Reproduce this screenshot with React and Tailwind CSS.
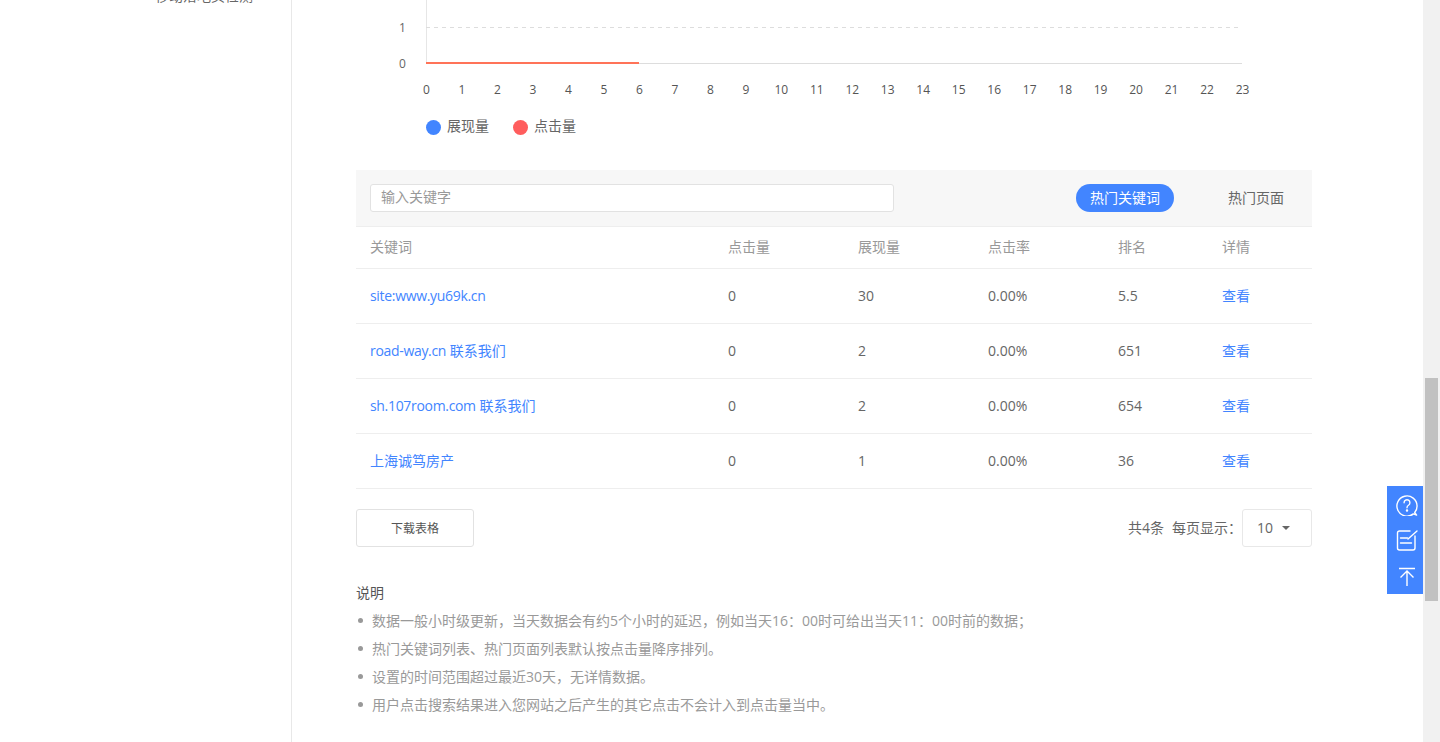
const hours = Array.from({ length: 24 }, (_, i) => i)

const rows = [
  { kw: 'site:www.yu69k.cn', cn: '', click: '0', show: '30', rate: '0.00%', rank: '5.5' },
  { kw: 'road-way.cn', cn: ' 联系我们', click: '0', show: '2', rate: '0.00%', rank: '651' },
  { kw: 'sh.107room.com', cn: ' 联系我们', click: '0', show: '2', rate: '0.00%', rank: '654' },
  { kw: '', cn: '上海诚笃房产', click: '0', show: '1', rate: '0.00%', rank: '36' },
]

const notes = [
  '数据一般小时级更新，当天数据会有约5个小时的延迟，例如当天16：00时可给出当天11：00时前的数据；',
  '热门关键词列表、热门页面列表默认按点击量降序排列。',
  '设置的时间范围超过最近30天，无详情数据。',
  '用户点击搜索结果进入您网站之后产生的其它点击不会计入到点击量当中。',
]

const Chart = () => (
  <svg width="956" height="100" className="block">
    <line x1="70.5" y1="0" x2="70.5" y2="64" stroke="#e6e6e6" />
    <line x1="70" y1="27.5" x2="886" y2="27.5" stroke="#ddd" strokeDasharray="4 4" />
    <line x1="70" y1="63.5" x2="886" y2="63.5" stroke="#ddd" />
    <line x1="70" y1="63" x2="283" y2="63" stroke="#ff7358" strokeWidth="2" />
    <text x="46.5" y="32" textAnchor="middle" fontSize="12" fill="#666">1</text>
    <text x="46.5" y="68" textAnchor="middle" fontSize="12" fill="#666">0</text>
    {hours.map((h) => (
      <text key={h} x={70.5 + h * 35.48} y="94" textAnchor="middle" fontSize="12" fill="#555">
        {h}
      </text>
    ))}
  </svg>
)

const App = () => {
  return (
    <div className="flex h-[742px] overflow-hidden bg-white text-[14px] font-['Open_Sans','Noto_Sans_CJK_SC',sans-serif] text-[#666]">
      {/* Sidebar */}
      <div className="w-[292px] shrink-0 border-r border-[#e8e8e8] pl-[155px]">
        <div className="-mt-[14px] h-5 leading-5 text-[#666]">移动落地页检测</div>
      </div>

      {/* Main */}
      <div className="flex-1 pl-[64px] pr-[111px]">
        <Chart />

        <div className="mt-[18px] ml-[70px] flex h-4 items-center gap-6 leading-4 text-[#666]">
          <div className="flex items-center gap-[6px]">
            <span className="mt-[2px] h-[15px] w-[15px] rounded-full bg-[#4285ff]" />
            展现量
          </div>
          <div className="flex items-center gap-[6px]">
            <span className="mt-[2px] h-[15px] w-[15px] rounded-full bg-[#ff5d5d]" />
            点击量
          </div>
        </div>

        {/* Filter bar */}
        <div className="mt-9 flex h-[57px] items-center border-b border-[#eee] bg-[#f7f7f7] pl-[14px]">
          <div className="flex h-7 w-[524px] items-center rounded-[3px] border border-[#e2e2e2] bg-white pb-1 pl-[10px] text-[#999]">
            输入关键字
          </div>
          <div className="ml-[182px] flex h-7 w-[98px] items-center justify-center rounded-full bg-[#4285ff] pb-[2px] text-white">
            热门关键词
          </div>
          <div className="ml-[54px] pb-[2px] text-[#666]">热门页面</div>
        </div>

        {/* Table */}
        <div className="grid h-[42px] grid-cols-[358px_130px_130px_130px_104px_1fr] items-center border-b border-[#eee] pb-[2px] pl-[14px] text-[#999]">
          <div>关键词</div>
          <div>点击量</div>
          <div>展现量</div>
          <div>点击率</div>
          <div>排名</div>
          <div>详情</div>
        </div>
        {rows.map((r) => (
          <div
            key={r.cn + r.kw}
            className="grid h-[55px] grid-cols-[358px_130px_130px_130px_104px_1fr] items-center border-b border-[#eee] pb-[2px] pl-[14px] text-[#666]"
          >
            <div className="whitespace-pre text-[#4285ff]">
              <span className="tracking-[-0.32px]">{r.kw}</span>
              {r.cn}
            </div>
            <div>{r.click}</div>
            <div>{r.show}</div>
            <div>{r.rate}</div>
            <div>{r.rank}</div>
            <div className="text-[#4285ff]">查看</div>
          </div>
        ))}

        {/* Footer of table */}
        <div className="mt-5 flex items-center justify-between">
          <div className="flex h-[38px] w-[118px] items-center justify-center rounded-[3px] border border-[#e2e2e2] pt-[1px] text-[12px] text-[#555]">
            下载表格
          </div>
          <div className="flex items-center">
            <span className="pb-[2px]">共4条</span>
            <span className="ml-2 pb-[2px]">每页显示：</span>
            <div className="flex h-[38px] w-[70px] items-center rounded-[3px] border border-[#e8e8e8] pb-[2px] pl-[14px]">
              10
              <span className="mt-[2px] ml-[9px] h-0 w-0 border-x-[4px] border-t-[4px] border-x-transparent border-t-[#666]" />
            </div>
          </div>
        </div>

        {/* Notes */}
        <div className="mt-9 leading-5 text-[#555]">说明</div>
        <ul className="mt-[3px] text-[#999]">
          {notes.map((n) => (
            <li key={n} className="flex h-7 items-center">
              <span className="mt-[1px] mr-[9px] ml-[2px] h-[5px] w-[5px] rounded-full bg-[#999]" />
              {n}
            </li>
          ))}
        </ul>
      </div>

      {/* Floating tools */}
      <div className="fixed top-[486px] right-[17px] flex h-[108px] w-9 flex-col items-center bg-[#4285ff] pl-1 text-white">
        <svg width="22" height="22" viewBox="0 0 24 24" fill="none" stroke="currentColor" strokeWidth="1.5" className="mt-2">
          <path d="M22.500 23l-3.600-1.300A11 11 0 1 1 23 13c0 2.900-1 5.300-2.600 7.200z" strokeLinejoin="round" />
          <path d="M8.800 9.500a3.200 3.200 0 1 1 4.800 2.800c-1 .6-1.600 1.300-1.600 2.700" strokeLinecap="round" />
          <circle cx="12" cy="18" r=".6" fill="currentColor" />
        </svg>
        <svg width="22" height="22" viewBox="0 0 22 22" fill="none" stroke="currentColor" strokeWidth="1.4" className="mt-[14px]">
          <path d="M14 1H3.500a2 2 0 0 0-2 2v15a2 2 0 0 0 2 2H17a2 2 0 0 0 2-2V6" strokeLinecap="round" />
          <path d="M12 9l9-8" strokeLinecap="round" />
          <path d="M4.500 8h7M4.500 13h11" strokeLinecap="round" />
        </svg>
        <svg width="18" height="20" viewBox="0 0 18 20" fill="none" stroke="currentColor" strokeWidth="1.4" className="mt-[15px]">
          <path d="M1 1.500h16M9 19V4M2.500 10.500L9 4l6.500 6.500" />
        </svg>
      </div>

      {/* Scrollbar */}
      <div className="relative h-full w-[17px] shrink-0 bg-[#f1f1f1]">
        <div className="absolute top-[378px] left-[2px] h-[223px] w-[13px] bg-[#c1c1c1]" />
      </div>
    </div>
  )
}

export default App
